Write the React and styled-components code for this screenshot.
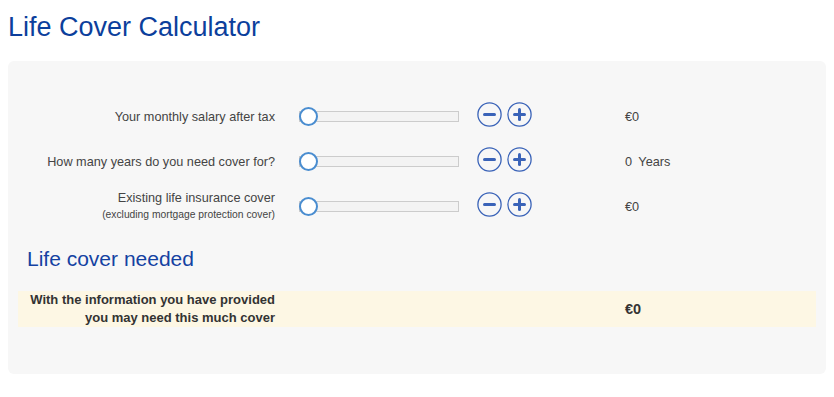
import React, { useState } from 'react'
import styled, { createGlobalStyle } from 'styled-components'

const GlobalStyle = createGlobalStyle`
  body {
    margin: 8px;
    background: #ffffff;
    font-family: "Liberation Sans", Arial, sans-serif;
  }
`

const Title = styled.h1`
  margin: 4px 0 19px;
  font-size: 27px;
  font-weight: 400;
  line-height: 30px;
  color: #0c3f9c;
`

const Panel = styled.div`
  background-color: #f7f7f7;
  border-radius: 6px;
  padding: 33px 10px 47px;
`

const Row = styled.div`
  display: flex;
  align-items: center;
  height: 45px;
  margin-left: -10px;
`

const Label = styled.div`
  width: 267px;
  text-align: right;
  font-size: 12.7px;
  line-height: 16px;
  color: #444;
  small {
    display: block;
    font-size: 10.3px;
    line-height: 18px;
  }
`

const Slider = styled.div`
  position: relative;
  margin-left: 24px;
  width: 160px;
  height: 11px;
  box-sizing: border-box;
  border: 1px solid #cccccc;
  background-color: #f3f3f3;
  .thumb {
    position: absolute;
    left: -1px;
    top: 50%;
    width: 19px;
    height: 19px;
    box-sizing: border-box;
    margin-top: -9.5px;
    border-radius: 50%;
    border: 2px solid #4a8dd0;
    background-color: #ffffff;
  }
`

const Buttons = styled.div`
  display: flex;
  gap: 5px;
  margin-left: 18px;
  margin-top: -4px;
`

const RoundButton = styled.button`
  width: 25px;
  height: 25px;
  padding: 0;
  border: none;
  background: transparent;
  cursor: pointer;
  svg {
    display: block;
  }
`

const Value = styled.div`
  margin-left: 93px;
  font-size: 12.7px;
  color: #444;
  word-spacing: 3px;
`

const SubTitle = styled.h2`
  margin: 18px 0 20px 9px;
  font-size: 21px;
  font-weight: 400;
  line-height: 24px;
  color: #1442a2;
`

const Highlight = styled.div`
  display: flex;
  align-items: center;
  background-color: #fdf7e4;
  height: 36px;
`

const HighlightText = styled.div`
  width: 257px;
  text-align: right;
  font-size: 13px;
  font-weight: 700;
  line-height: 18px;
  color: #333;
`

const Total = styled.div`
  margin-left: 350px;
  font-size: 14.5px;
  font-weight: 700;
  color: #333;
`

function StepIcon({ plus }) {
  return (
    <svg width="25" height="25" viewBox="0 0 25 25">
      <circle cx="12.5" cy="12.5" r="11.6" fill="none" stroke="#3a63b8" strokeWidth="1.3" />
      <line x1="7.5" y1="12.5" x2="17.5" y2="12.5" stroke="#3a63b8" strokeWidth="3" strokeLinecap="round" />
      {plus && (
        <line x1="12.5" y1="7.5" x2="12.5" y2="17.5" stroke="#3a63b8" strokeWidth="3" strokeLinecap="round" />
      )}
    </svg>
  )
}

const fields = [
  { label: 'Your monthly salary after tax', kind: 'money' },
  { label: 'How many years do you need cover for?', kind: 'years' },
  { label: 'Existing life insurance cover', note: '(excluding mortgage protection cover)', kind: 'money' },
]

export default function App() {
  const [values] = useState([0, 0, 0])

  return (
    <>
      <GlobalStyle />
      <Title>Life Cover Calculator</Title>
      <Panel>
        {fields.map((field, index) => (
          <Row key={index}>
            <Label>
              {field.label}
              {field.note && <small>{field.note}</small>}
            </Label>
            <Slider>
              <div className="thumb" />
            </Slider>
            <Buttons>
              <RoundButton aria-label="decrease"><StepIcon /></RoundButton>
              <RoundButton aria-label="increase"><StepIcon plus /></RoundButton>
            </Buttons>
            <Value>
              {field.kind === 'money' ? `€${values[index]}` : `${values[index]} Years`}
            </Value>
          </Row>
        ))}
        <SubTitle>Life cover needed</SubTitle>
        <Highlight>
          <HighlightText>
            With the information you have provided
            <br />
            you may need this much cover
          </HighlightText>
          <Total>€0</Total>
        </Highlight>
      </Panel>
    </>
  )
}
